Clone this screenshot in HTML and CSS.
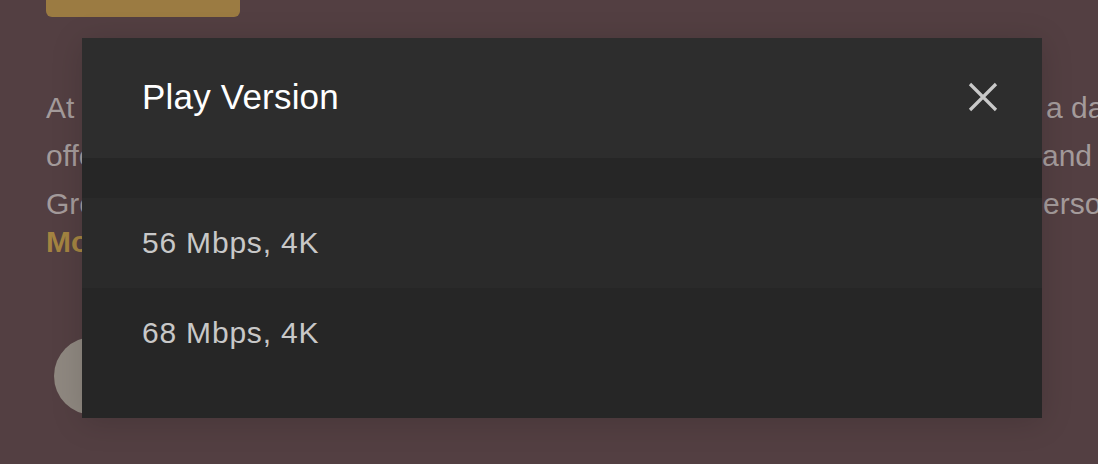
FILE: index.html
```html
<!DOCTYPE html>
<html lang="en">
<head>
<meta charset="utf-8">
<title>Play Version</title>
<link rel="stylesheet" href="styles.css">
</head>
<body>
<div class="page">
  <div class="play-btn"></div>
  <div class="desc">
    <div class="line"><span class="left">At the</span><span class="right r1">a day</span></div>
    <div class="line"><span class="left">offers</span><span class="right r2">and</span></div>
    <div class="line"><span class="left">Greg</span><span class="right r3">erso</span></div>
    <div class="line more"><span class="left">More</span></div>
  </div>
  <div class="avatar"></div>
</div>

<div class="modal" role="dialog" aria-label="Play Version">
  <div class="modal-header">
    <h2 class="modal-title">Play Version</h2>
    <button class="close" aria-label="Close">
      <svg width="30" height="30" viewBox="0 0 30 30"><path d="M2 2 L28 28 M28 2 L2 28" stroke="#c9c9c9" stroke-width="3.2" fill="none"/></svg>
    </button>
  </div>
  <div class="modal-list">
    <div class="option active">56 Mbps, 4K</div>
    <div class="option">68 Mbps, 4K</div>
  </div>
</div>
</body>
</html>
```

FILE: styles.css
```css
html, body {
  margin: 0;
  padding: 0;
}
body {
  width: 1098px;
  height: 464px;
  overflow: hidden;
  background: #533f42;
  font-family: "Liberation Sans", Arial, sans-serif;
  position: relative;
}
.page {
  padding: 0 0 0 46px;
}
.play-btn {
  width: 194px;
  height: 17px;
  background: #9b7b42;
  border-radius: 0 0 6px 6px;
}
.desc {
  margin-top: 67px;
  color: #a49b9b;
  font-size: 30px;
}
.line {
  display: grid;
  grid-template-columns: 996px auto;
  height: 48px;
  line-height: 48px;
  white-space: nowrap;
}
.line.more {
  height: 42px;
  line-height: 30px;
  margin-top: -1px;
  color: #a48441;
  font-weight: bold;
}
.r1 { padding-left: 4px; }
.r2 { padding-left: 0; }
.r3 { padding-left: 1px; }
.avatar {
  width: 78px;
  height: 78px;
  border-radius: 50%;
  background: #8f8880;
  margin: 68px 0 0 8px;
}
.modal {
  position: absolute;
  left: 82px;
  top: 38px;
  width: 960px;
  height: 380px;
  background: #262626;
  box-shadow: 0 4px 30px rgba(0,0,0,0.15);
  display: flex;
  flex-direction: column;
}
.modal-header {
  height: 120px;
  background: #2d2d2d;
  display: flex;
  align-items: center;
  justify-content: space-between;
  padding: 0 44px 0 60px;
}
.modal-title {
  margin: 0;
  font-weight: normal;
  font-size: 35px;
  color: #ffffff;
  letter-spacing: 0.2px;
  padding-bottom: 2px;
}
.close {
  background: none;
  border: 0;
  padding: 0;
  width: 30px;
  height: 30px;
  display: flex;
  margin-bottom: 3px;
}
.modal-list {
  padding-top: 40px;
}
.option {
  height: 90px;
  line-height: 90px;
  padding-left: 60px;
  font-size: 30px;
  color: #c8c8c8;
  letter-spacing: 0.8px;
}
.option.active {
  background: #2a2a2a;
}
```
